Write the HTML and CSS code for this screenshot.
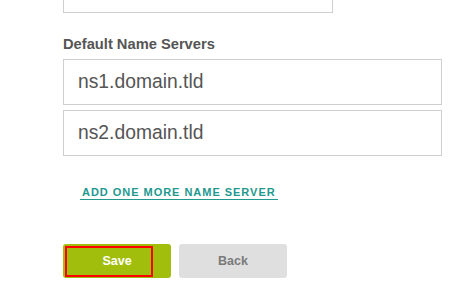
FILE: index.html
```html
<!DOCTYPE html>
<html>
<head>
<meta charset="utf-8">
<link rel="stylesheet" href="styles.css">
</head>
<body>
<div class="form">
  <div class="field-prev"></div>
  <div class="label">Default Name Servers</div>
  <div class="inputs">
    <div class="input">ns1.domain.tld</div>
    <div class="input">ns2.domain.tld</div>
  </div>
  <div class="link-row"><a class="add-link" href="#">ADD ONE MORE NAME SERVER</a></div>
  <div class="actions">
    <button class="btn btn-save">Save<span class="focus-mark"></span></button>
    <button class="btn btn-back">Back</button>
  </div>
</div>
</body>
</html>
```

FILE: styles.css
```css
html, body {
  margin: 0;
  padding: 0;
  background: #fff;
}
body {
  font-family: "Liberation Sans", Arial, sans-serif;
  overflow: hidden;
}
.form {
  padding-left: 63px;
}
.field-prev {
  box-sizing: border-box;
  width: 270px;
  height: 46px;
  margin-top: -33px;
  border: 1px solid #cfcfcf;
}
.label {
  margin-top: 23px;
  font-size: 14.7px;
  line-height: 17px;
  font-weight: bold;
  color: #555;
}
.inputs {
  margin-top: 6px;
  display: flex;
  flex-direction: column;
  gap: 5px;
}
.input {
  box-sizing: border-box;
  width: 379px;
  height: 46px;
  border: 1px solid #cfcfcf;
  padding-left: 14px;
  display: flex;
  align-items: center;
  font-size: 19.3px;
  color: #555;
}
.link-row {
  margin-top: 28px;
  padding-left: 17px;
  line-height: 13px;
}
.add-link {
  display: inline-block;
  font-size: 11px;
  line-height: 13px;
  font-weight: bold;
  letter-spacing: 0.97px;
  color: #22988f;
  text-decoration: none;
  padding: 0 2px;
  border-bottom: 1px solid #22988f;
}
.actions {
  margin-top: 44px;
  display: flex;
  gap: 8px;
}
.btn {
  position: relative;
  box-sizing: border-box;
  width: 108px;
  height: 34px;
  border: none;
  border-radius: 3px;
  font-family: "Liberation Sans", Arial, sans-serif;
  font-size: 12.5px;
  font-weight: bold;
  padding: 0;
}
.btn-save {
  background: #a2be0c;
  color: #fff;
}
.btn-back {
  background: #dfdfdf;
  color: #7a7a7a;
}
.focus-mark {
  position: absolute;
  left: 2px;
  top: 2px;
  width: 88px;
  height: 31px;
  box-sizing: border-box;
  border: 2px solid #f00;
}
```
